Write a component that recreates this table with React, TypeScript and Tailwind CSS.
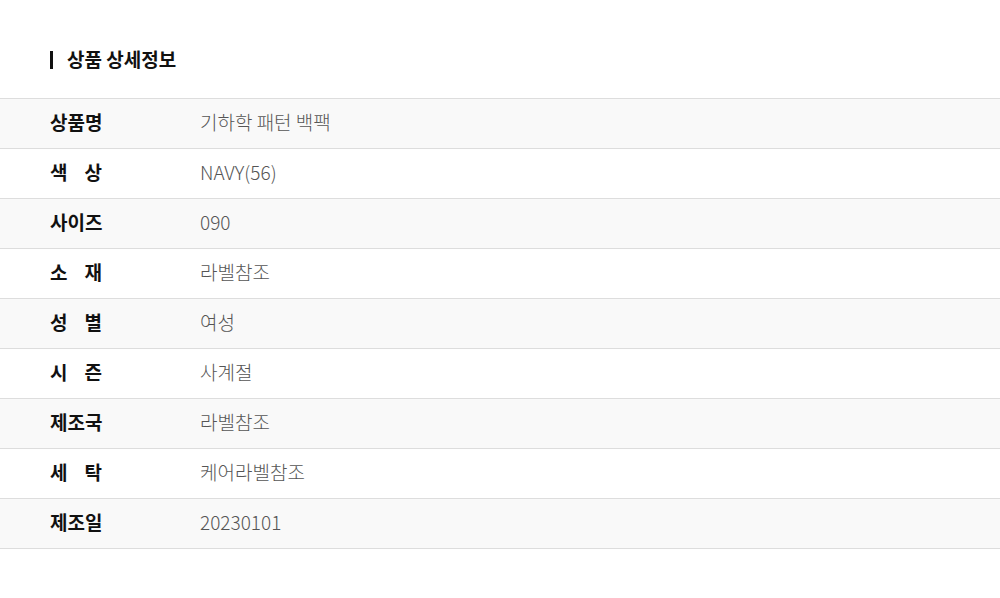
const ROWS: { label: string; value: string }[] = [
  { label: '상품명', value: '기하학 패턴 백팩' },
  { label: '색상', value: 'NAVY(56)' },
  { label: '사이즈', value: '090' },
  { label: '소재', value: '라벨참조' },
  { label: '성별', value: '여성' },
  { label: '시즌', value: '사계절' },
  { label: '제조국', value: '라벨참조' },
  { label: '세탁', value: '케어라벨참조' },
  { label: '제조일', value: '20230101' },
]

export default function App() {
  return (
    <div
      className="w-[1000px] h-[598px] bg-white pt-[47px]"
      style={{ fontFamily: '"Noto Sans CJK KR", "Noto Sans", sans-serif' }}
    >
      <div className="flex items-center gap-[14px] pl-[50px] h-[24px]">
        <span className="w-[3px] h-[18px] bg-[#111] mt-[1px]" />
        <h2 className="text-[19px] font-bold text-[#111] leading-none -mt-[2px]">상품 상세정보</h2>
      </div>

      <div className="mt-[27px] border-t border-[#dddddd]">
        {ROWS.map((row, i) => (
          <div
            key={row.label}
            className={`flex items-center h-[50px] pb-[3px] border-b border-[#dddddd] ${i % 2 === 0 ? 'bg-[#f9f9f9]' : 'bg-white'}`}
          >
            <div className="w-[200px] shrink-0 pl-[50px]">
              {row.label.length === 2 ? (
                <span className="flex justify-between w-[52px] text-[19px] font-bold text-[#111]">
                  <span>{row.label[0]}</span>
                  <span>{row.label[1]}</span>
                </span>
              ) : (
                <span className="text-[19px] font-bold text-[#111]">{row.label}</span>
              )}
            </div>
            <div className="text-[19px] font-light text-[#555]">{row.value}</div>
          </div>
        ))}
      </div>
    </div>
  )
}
